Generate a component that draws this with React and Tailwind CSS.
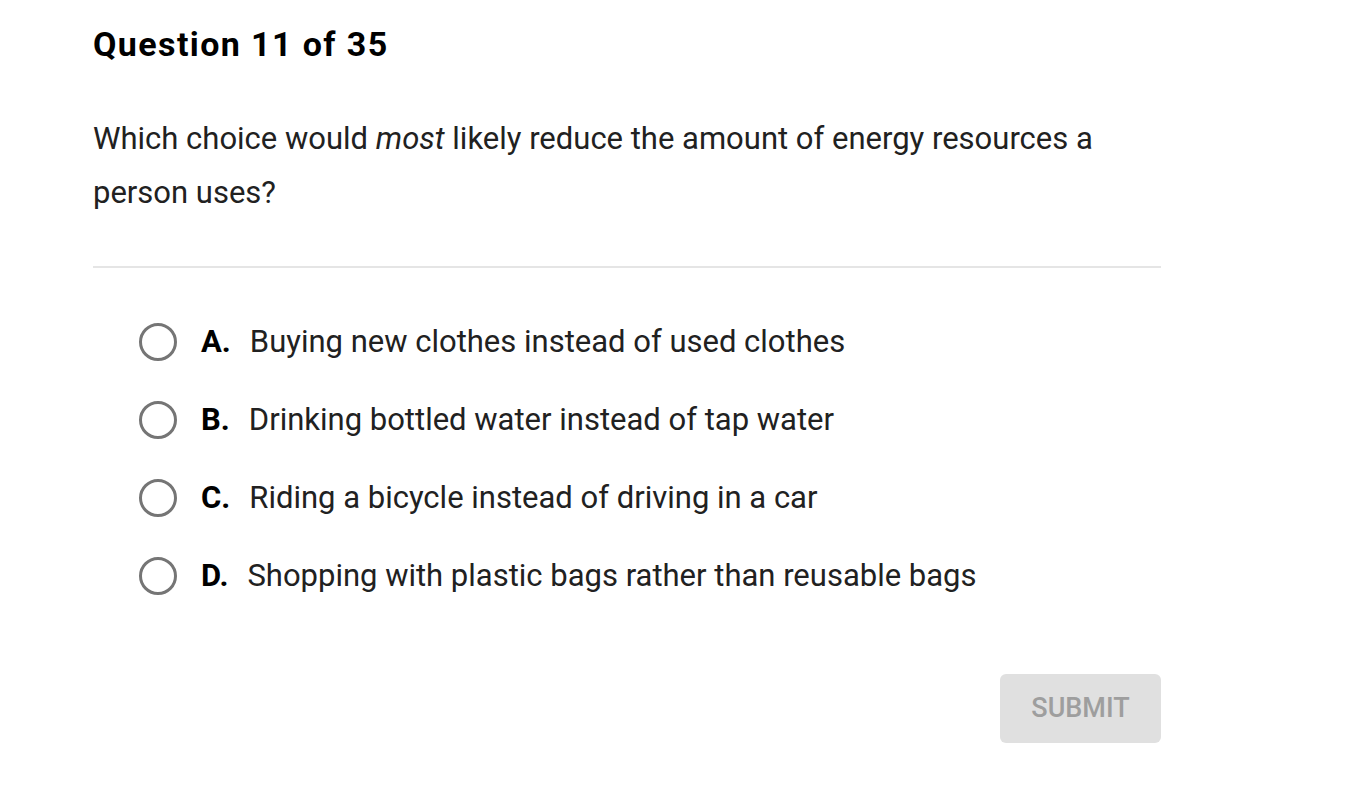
export default function App() {
  const options = [
    { letter: 'A', text: 'Buying new clothes instead of used clothes' },
    { letter: 'B', text: 'Drinking bottled water instead of tap water' },
    { letter: 'C', text: 'Riding a bicycle instead of driving in a car' },
    { letter: 'D', text: 'Shopping with plastic bags rather than reusable bags' },
  ];

  return (
    <div className="min-h-screen bg-white font-['Roboto',sans-serif] text-[#212121]">
      <div className="w-[1068px] ml-[93px] pt-[22px]">
        <h1 className="text-[34px] leading-[44px] font-bold tracking-[1.4px] text-black">
          Question 11 of 35
        </h1>

        <p className="mt-[46px] text-[31px] leading-[54px]">
          Which choice would <em>most</em> likely reduce the amount of energy resources a person uses?
        </p>

        <div className="mt-[46px] h-[2px] bg-[#e5e5e5]" />

        <div className="mt-[55px] pl-[46px] flex flex-col gap-[40px]">
          {options.map((o) => (
            <label key={o.letter} className="flex items-center h-[38px] cursor-pointer">
              <span className="w-[38px] h-[38px] rounded-full border-[3px] border-[#757575] shrink-0" />
              <span className="ml-[24px] mr-[19px] text-[31px] font-bold text-black">{o.letter}.</span>
              <span className="text-[31px]">{o.text}</span>
            </label>
          ))}
        </div>

        <div className="mt-[79px] flex justify-end">
          <button className="w-[161px] h-[69px] rounded-[6px] bg-[#e0e0e0] text-[#9e9e9e] text-[27px] font-medium">
            SUBMIT
          </button>
        </div>
      </div>
    </div>
  );
}
